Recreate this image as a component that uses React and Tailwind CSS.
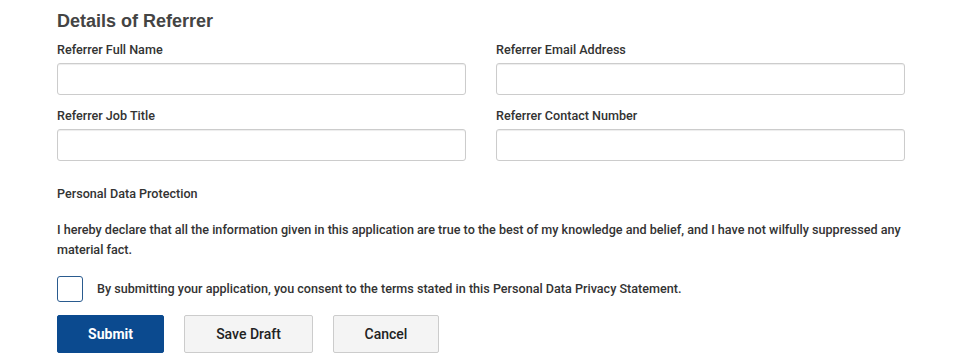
import {useState} from "react";

const Field = ({label, value, onChange}) => (
    <div className="flex flex-col">
        <label className="text-[12.6px] leading-4 font-medium text-[#333] mb-[5px]">{label}</label>
        <input
            type="text"
            className="h-8 w-full border border-[#ccc] rounded-[3px] px-2 text-[13px] shadow-[inset_0_1px_1px_rgba(0,0,0,0.075)] outline-none"
            value={value}
            onChange={(e) => onChange(e.target.value)}
        />
    </div>
);

const App = () => {
    const [form, setForm] = useState({name: "", email: "", job: "", phone: ""});
    const [agree, setAgree] = useState(false);
    const set = (key) => (v) => setForm({...form, [key]: v});

    return (
        <div className="min-h-screen bg-white font-['Roboto',sans-serif] text-[#333]">
            <div className="w-[848px] ml-[57px] pt-[9px]">
                <h2 className="font-['Liberation_Sans',Arial,sans-serif] text-[18px] leading-6 font-bold text-[#444]">
                    Details of Referrer
                </h2>

                <div className="grid grid-cols-2 gap-x-[30px] gap-y-[13px] mt-[9px]">
                    <Field label="Referrer Full Name" value={form.name} onChange={set("name")}/>
                    <Field label="Referrer Email Address" value={form.email} onChange={set("email")}/>
                    <Field label="Referrer Job Title" value={form.job} onChange={set("job")}/>
                    <Field label="Referrer Contact Number" value={form.phone} onChange={set("phone")}/>
                </div>

                <p className="text-[12.6px] leading-4 font-medium mt-[25px]">Personal Data Protection</p>

                <p className="text-[12.6px] leading-5 font-medium mt-[18px]">
                    I hereby declare that all the information given in this application are true to the best of my knowledge and belief, and I have not wilfully suppressed any material fact.
                </p>

                <label className="flex items-center gap-[14px] mt-[16px] cursor-pointer">
                    <input type="checkbox" className="sr-only" checked={agree} onChange={(e) => setAgree(e.target.checked)}/>
                    <span className="w-[26px] h-[26px] border border-[#2a5b8f] rounded-[3px] bg-white flex items-center justify-center text-[#0b4a8f] text-sm">
                        {agree ? "✓" : ""}
                    </span>
                    <span className="text-[12.6px] leading-5 font-medium">
                        By submitting your application, you consent to the terms stated in this Personal Data Privacy Statement.
                    </span>
                </label>

                <div className="flex gap-5 mt-[13px]">
                    <button className="w-[107px] h-[38px] bg-[#0b4a8f] text-white text-[14px] font-bold rounded-[2px] border border-[#0b4a8f]">
                        Submit
                    </button>
                    <button className="w-[129px] h-[38px] bg-[#f4f4f4] text-[#222] text-[14px] font-medium rounded-[2px] border border-[#ccc]">
                        Save Draft
                    </button>
                    <button className="w-[106px] h-[38px] bg-[#f4f4f4] text-[#222] text-[14px] font-medium rounded-[2px] border border-[#ccc]">
                        Cancel
                    </button>
                </div>
            </div>
        </div>
    );
};

export default App;
